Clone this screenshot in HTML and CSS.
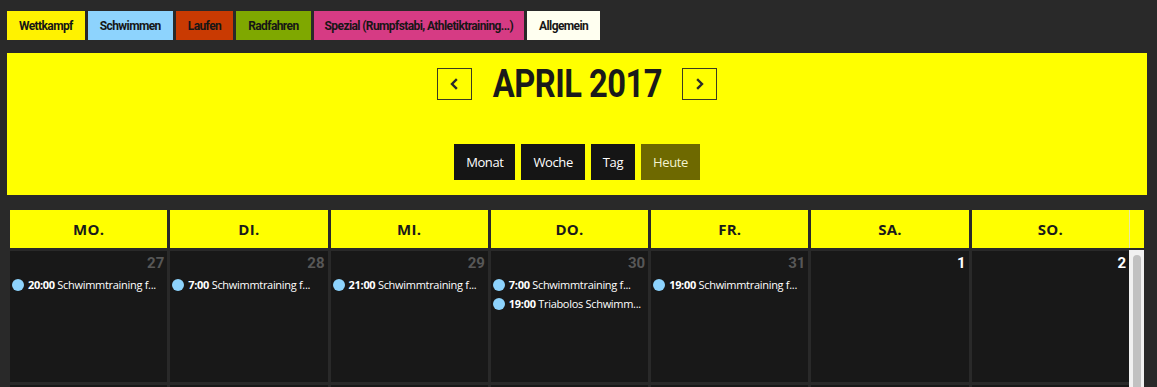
FILE: index.html
```html
<!DOCTYPE html>
<html lang="de">
<head>
<meta charset="utf-8">
<title>Kalender April 2017</title>
<link rel="stylesheet" href="styles.css">
</head>
<body>
<div class="legend">
  <span class="tag tag-wk">Wettkampf</span>
  <span class="tag tag-sw">Schwimmen</span>
  <span class="tag tag-lf">Laufen</span>
  <span class="tag tag-rf">Radfahren</span>
  <span class="tag tag-sp">Spezial (Rumpfstabi, Athletiktraining...)</span>
  <span class="tag tag-al">Allgemein</span>
</div>

<div class="toolbar">
  <div class="nav">
    <button class="arrow" aria-label="zurück"><svg width="10" height="12" viewBox="0 0 10 12"><path d="M7 2 L3 6 L7 10" fill="none" stroke="#2b2b2b" stroke-width="2.4" stroke-linecap="square"/></svg></button>
    <h1 class="title">APRIL 2017</h1>
    <button class="arrow" aria-label="vor"><svg width="10" height="12" viewBox="0 0 10 12"><path d="M3 2 L7 6 L3 10" fill="none" stroke="#2b2b2b" stroke-width="2.4" stroke-linecap="square"/></svg></button>
  </div>
  <div class="views">
    <button class="view">Monat</button>
    <button class="view">Woche</button>
    <button class="view">Tag</button>
    <button class="view view-today">Heute</button>
  </div>
</div>

<div class="calendar">
  <div class="head">
    <div class="days">
      <div class="dh">MO.</div>
      <div class="dh">DI.</div>
      <div class="dh">MI.</div>
      <div class="dh">DO.</div>
      <div class="dh">FR.</div>
      <div class="dh">SA.</div>
      <div class="dh">SO.</div>
    </div>
    <div class="gutter"></div>
  </div>
  <div class="body">
    <div class="grid">
      <div class="cell other">
        <div class="num">27</div>
        <div class="ev"><span class="dot"></span><span class="evt"><b>20:00</b> Schwimmtraining f...</span></div>
      </div>
      <div class="cell other">
        <div class="num">28</div>
        <div class="ev"><span class="dot"></span><span class="evt"><b>7:00</b> Schwimmtraining f...</span></div>
      </div>
      <div class="cell other">
        <div class="num">29</div>
        <div class="ev"><span class="dot"></span><span class="evt"><b>21:00</b> Schwimmtraining f...</span></div>
      </div>
      <div class="cell other">
        <div class="num">30</div>
        <div class="ev"><span class="dot"></span><span class="evt"><b>7:00</b> Schwimmtraining f...</span></div>
        <div class="ev"><span class="dot"></span><span class="evt"><b>19:00</b> Triabolos Schwimm...</span></div>
      </div>
      <div class="cell other">
        <div class="num">31</div>
        <div class="ev"><span class="dot"></span><span class="evt"><b>19:00</b> Schwimmtraining f...</span></div>
      </div>
      <div class="cell">
        <div class="num">1</div>
      </div>
      <div class="cell">
        <div class="num">2</div>
      </div>
      <div class="cell"></div>
      <div class="cell"></div>
      <div class="cell"></div>
      <div class="cell"></div>
      <div class="cell"></div>
      <div class="cell"></div>
      <div class="cell"></div>
    </div>
    <div class="scroll"><div class="thumb"></div></div>
  </div>
</div>
</body>
</html>
```

FILE: styles.css
```css
html, body {
  margin: 0;
  padding: 0;
}
body {
  background: #292929;
  height: 387px;
  overflow: hidden;
  font-family: "Open Sans", "Liberation Sans", sans-serif;
}

/* legend */
.legend {
  display: flex;
  gap: 3px;
  margin: 11px 7px 0;
}
.tag {
  display: flex;
  align-items: center;
  height: 29px;
  padding: 0 12px;
  font-family: Roboto, "Liberation Sans", sans-serif;
  font-weight: 700;
  font-size: 12px;
  letter-spacing: -0.6px;
  color: #161616;
}
.tag-wk { background: #fff200; }
.tag-sw { background: #8dd3fd; }
.tag-lf { background: #c93a02; }
.tag-rf { background: #7fa800; }
.tag-sp { background: #d63b84; padding: 0 11px; }
.tag-al { background: #fffff0; }

/* toolbar */
.toolbar {
  margin: 13px 10px 0 7px;
  height: 142px;
  box-sizing: border-box;
  padding: 15px 0;
  background: #ffff00;
  display: flex;
  flex-direction: column;
  align-items: center;
  justify-content: space-between;
}
.nav {
  display: flex;
  align-items: center;
  gap: 21px;
}
.arrow {
  width: 35px;
  height: 32px;
  box-sizing: border-box;
  border: 1px solid #3b3b20;
  background: transparent;
  padding: 0;
  display: flex;
  align-items: center;
  justify-content: center;
}
.title {
  margin: 0 -14px;
  font-family: Roboto, "Liberation Sans", sans-serif;
  font-weight: 700;
  font-size: 38px;
  line-height: 32px;
  letter-spacing: -0.6px;
  color: #1a1a1a;
  transform: scaleX(0.86);
}
.views {
  display: flex;
  gap: 6px;
}
.view {
  height: 36px;
  padding: 0 12px;
  border: 0;
  background: #151515;
  color: #ffffff;
  font-family: "Open Sans", "Liberation Sans", sans-serif;
  font-size: 13px;
  letter-spacing: -0.4px;
}
.view-today {
  background: #6e6900;
  color: #f2f2d0;
}

/* calendar */
.calendar {
  margin: 15px 0 0 10px;
  width: 1134px;
}
.head {
  display: flex;
  height: 38px;
}
.days {
  flex: 1;
  display: grid;
  grid-template-columns: repeat(7, 1fr);
  column-gap: 3px;
}
.dh {
  background: #ffff00;
  display: flex;
  align-items: center;
  justify-content: center;
  font-family: "Open Sans", "Liberation Sans", sans-serif;
  font-weight: 700;
  font-size: 15px;
  letter-spacing: 0.3px;
  color: #1a1a1a;
}
.gutter {
  width: 15px;
  box-sizing: border-box;
  background: #ffff00;
  border-left: 1px solid #e6e6a8;
}
.body {
  display: flex;
  margin-top: 3px;
}
.grid {
  flex: 1;
  display: grid;
  grid-template-columns: repeat(7, 1fr);
  grid-auto-rows: 131px;
  gap: 3px;
}
.cell {
  background: #181818;
  padding: 3px 3px 0 2px;
  overflow: hidden;
}
.num {
  text-align: right;
  font-family: Roboto, "Liberation Sans", sans-serif;
  font-weight: 700;
  font-size: 15px;
  line-height: 18px;
  color: #ffffff;
  margin-bottom: 3px;
}
.other .num {
  color: #575757;
}
.ev {
  display: flex;
  align-items: center;
  gap: 4px;
  height: 19px;
  white-space: nowrap;
}
.dot {
  width: 12px;
  height: 12px;
  border-radius: 50%;
  background: #8dd3fd;
  flex: none;
}
.evt {
  font-family: "Open Sans", "Liberation Sans", sans-serif;
  font-size: 11px;
  letter-spacing: -0.3px;
  color: #ffffff;
}
.evt b {
  font-weight: 700;
}
.scroll {
  width: 15px;
  margin-top: -1px;
  background: #f1f1f1;
  box-sizing: border-box;
  padding: 5px 3px 0 4px;
  height: 140px;
}
.thumb {
  height: 200px;
  background: #c1c1c1;
  border-radius: 4px 4px 0 0;
}
```
